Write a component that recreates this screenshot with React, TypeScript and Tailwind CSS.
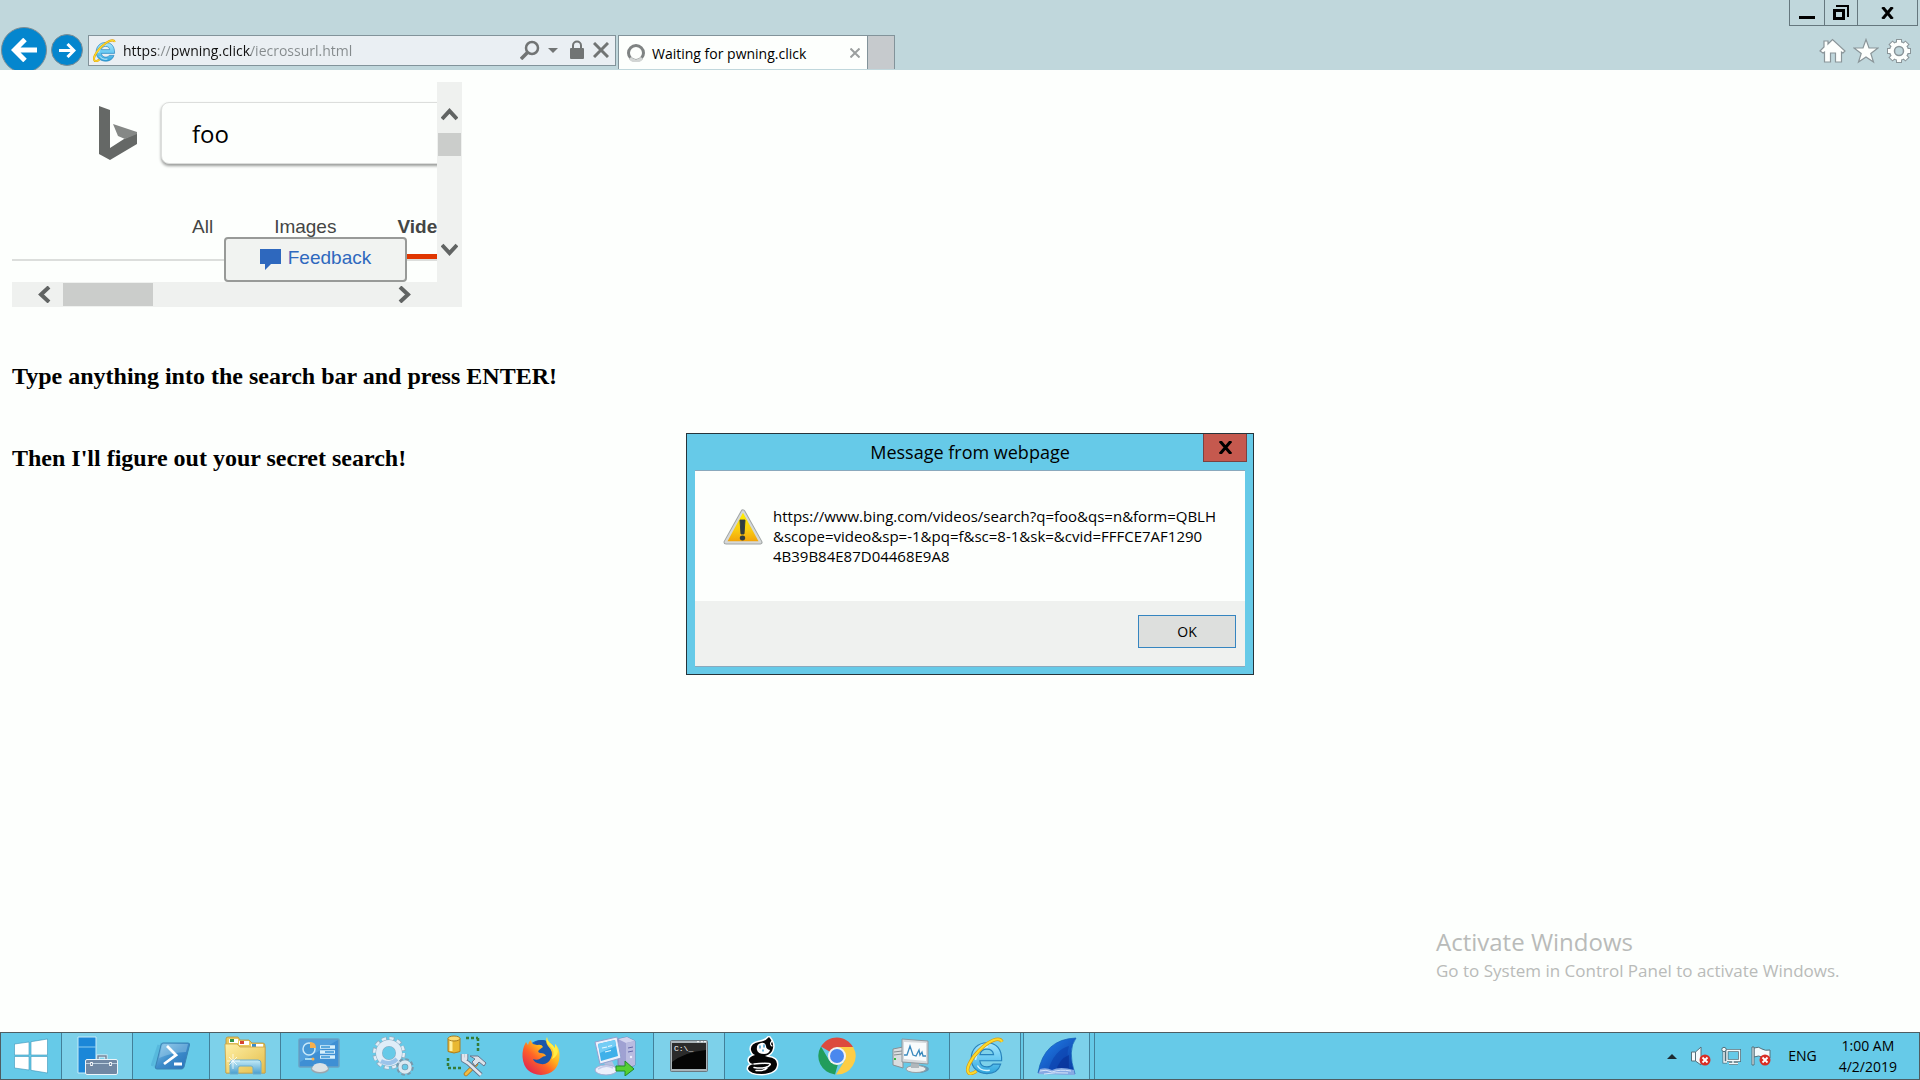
import type { ReactNode } from "react"

const ui = "font-['Open_Sans','Noto_Sans',sans-serif]"

function IeLogo({ size }: { size: number }) {
    return (
        <svg width={size} height={size} viewBox="0 0 40 40" fill="none">
            <defs>
                <linearGradient id="ieBlue" x1="0" y1="0" x2="0" y2="1">
                    <stop offset="0" stopColor="#a5e6fb" />
                    <stop offset="0.5" stopColor="#6ccbf3" />
                    <stop offset="1" stopColor="#2fa4dc" />
                </linearGradient>
            </defs>
            <path
                d="M37.500 25H14.500C15 29 18 31.500 22 31.500C25 31.500 27 30.500 28.500 28.500H36.500C34.500 35 29 38.500 22 38.500C12.500 38.500 5.500 32 5.500 22.500C5.500 13 12.500 6 22 6C32 6 38 13 37.500 25ZM14.700 18.500H29C28.500 15 26 12.800 22 12.800C18 12.800 15.500 15 14.700 18.500Z"
                fill="url(#ieBlue)" stroke="#2783bd" strokeWidth="1.200" />
            <path d="M10 24c1-8 6-13 13-14M12 30c2 4 7 6 13 5" stroke="#d6f5fe" strokeWidth="1.500" />
            <path d="M38 5C35-1 24 4 14 14C5 23-1 34 3 38C5 39.500 8 38 11 36" stroke="#d99a12" strokeWidth="3.600" />
            <path d="M38 5C35-1 24 4 14 14C5 23-1 34 3 38C5 39.500 8 38 11 36" stroke="#fddb2c" strokeWidth="2.200" />
        </svg>
    )
}

function StartIcon() {
    return (
        <svg width="34" height="36" viewBox="0 0 34 36" fill="#fff" stroke="#3b93b8" strokeWidth="0.600">
            <path d="M.5 6L15 4v13H.5zM17 3.700L33.500 1v16H17zM.5 18.500H15V32L.5 30zM17 18.500h16.500V35L17 32.300z" />
        </svg>
    )
}

function ServerManagerIcon() {
    return (
        <svg width="42" height="40" viewBox="0 0 42 40">
            <path d="M2 1h18v36H2z" fill="#1b87d8" stroke="#c8ecf9" />
            <path d="M2 11h18" stroke="#8ccdf0" />
            <path d="M22 23v-3h8v3" fill="none" stroke="#e5f0f6" strokeWidth="3" />
            <path d="M22 23v-3h8v3" fill="none" stroke="#71859c" strokeWidth="1.500" />
            <rect x="9.500" y="23.500" width="32" height="15" rx="1.500" fill="#7188a3" stroke="#edf5f9" />
            <path d="M10 27.500h31" stroke="#bdd0df" />
            <path d="M15.500 26v4M34.500 26v4" stroke="#fff" strokeWidth="2.500" />
            <path d="M15.500 27v2M34.500 27v2" stroke="#7188a3" />
        </svg>
    )
}

function PowerShellIcon() {
    return (
        <svg width="40" height="30" viewBox="0 0 40 30">
            <defs>
                <linearGradient id="ps" x1="0" y1="0" x2="1" y2="1">
                    <stop offset="0" stopColor="#8cc9ea" />
                    <stop offset="0.500" stopColor="#3d8dcb" />
                    <stop offset="1" stopColor="#286fb8" />
                </linearGradient>
            </defs>
            <path d="M1 25L8 4M4 27L11 2" stroke="#3d9acb" strokeWidth="3" opacity="0.350" />
            <path d="M12 2h25q2 0 1.500 2L33 26q-.6 2-2.500 2H6q-2 0-1.500-2L10 4q.5-2 2-2z" fill="url(#ps)" stroke="#3a84b5" />
            <path d="M13 3h24l-2 8Q22 11 8 17l3-12z" fill="#b7e0f4" opacity="0.350" />
            <path d="M16 5l9 9-12 9M23 23h8" fill="none" stroke="#fff" strokeWidth="2.800" />
        </svg>
    )
}

function ExplorerIcon() {
    return (
        <svg width="42" height="40" viewBox="0 0 42 40">
            <defs>
                <linearGradient id="folder" x1="0" y1="0" x2="1" y2="1">
                    <stop offset="0" stopColor="#fff0a5" />
                    <stop offset="1" stopColor="#e3bd4b" />
                </linearGradient>
                <linearGradient id="holder" x1="0" y1="0" x2="0" y2="1">
                    <stop offset="0" stopColor="#c5ecf8" />
                    <stop offset="1" stopColor="#489dcd" />
                </linearGradient>
            </defs>
            <path d="M2 6V3q0-2 2-2h10l2 3h9l3 3h11q2 0 2 3v27H2z" fill="#e8c95e" stroke="#b9913b" strokeWidth="0.800" />
            <path d="M5 3h9v4H5zM15 5h10v4H15zM27 8h12v4H27z" fill="#fff" />
            <path d="M6 3h4v3H6z" fill="#329447" />
            <path d="M16 5h4v3h-4z" fill="#d74432" />
            <path d="M28 8h4v3h-4z" fill="#368dcc" />
            <path d="M1 8h12l3 3h25v26H2z" fill="url(#folder)" stroke="#cba346" strokeWidth="0.800" />
            <path d="M6 38V27q0-3 3-3h25q3 0 3 3v11h-8v-6q0-2-2-2H16q-2 0-2 2v6z" fill="url(#holder)" stroke="#6aaed0" />
            <path d="M9 18v15M3 25h13M5 21l8 8M13 21l-8 8" stroke="#fff" strokeWidth="0.800" opacity="0.900" />
        </svg>
    )
}

function ControlPanelIcon() {
    return (
        <svg width="42" height="36" viewBox="0 0 42 36">
            <rect x="1" y="1" width="40" height="28" rx="1" fill="#3e8fd4" stroke="#6aa2c4" strokeWidth="1.500" />
            <path d="M2 2h38L2 24z" fill="#65b1e5" opacity="0.500" />
            <circle cx="11" cy="11" r="6" fill="#4798d6" stroke="#c9e8f9" strokeWidth="1.500" />
            <path d="M12 10V4q6 0 6 6z" fill="#f9b04d" />
            <path d="M22 9h15M22 14h15M22 19h15" stroke="#d6f0fc" strokeWidth="3.500" />
            <path d="M23 9h9M27 14h9M23 19h9" stroke="#3591d3" strokeWidth="1.500" />
            <path d="M7 21h7" stroke="#a6dcf4" strokeWidth="2" />
            <circle cx="15" cy="21" r="1.500" fill="#f9b04d" />
            <ellipse cx="22" cy="31" rx="9" ry="4.500" fill="#9ba6ae" />
            <path d="M14 31q1-6 8-6t8 6q-3 3-8 3t-8-3z" fill="#dce2e5" />
        </svg>
    )
}

function ServicesIcon() {
    return (
        <svg width="42" height="40" viewBox="0 0 42 40" fill="none">
            <circle cx="17" cy="17" r="14.500" stroke="#8eaec2" strokeWidth="4.500" strokeDasharray="5 2.590" />
            <circle cx="17" cy="17" r="14" stroke="#e1eef7" strokeWidth="4" strokeDasharray="4 3.330" />
            <circle cx="17" cy="17" r="10" stroke="#88aac0" strokeWidth="7" />
            <circle cx="17" cy="17" r="10" stroke="#dfedf8" strokeWidth="6" />
            <path d="M9 25q9 5 16-2" stroke="#9cc4ea" strokeWidth="4" />
            <circle cx="33" cy="31" r="7" stroke="#7899ac" strokeWidth="3.500" strokeDasharray="3.300 2.200" />
            <circle cx="33" cy="31" r="4.800" stroke="#7899ac" strokeWidth="4.500" />
            <circle cx="33" cy="31" r="5" stroke="#dbe9f2" strokeWidth="3.400" />
        </svg>
    )
}

function DatabaseToolsIcon() {
    return (
        <svg width="42" height="42" viewBox="0 0 42 42" fill="none">
            <path d="M2 3.500v13q6 3 12 0v-13z" fill="#e9b832" stroke="#a97d20" />
            <path d="M5 5v11" stroke="#fff0a2" strokeWidth="3" />
            <ellipse cx="8" cy="3.500" rx="6" ry="2.500" fill="#fbdc72" stroke="#a97d20" />
            <path d="M20 3h12M32 3v15M2 23v10M2 33h15" stroke="#357c36" strokeWidth="2.500" strokeDasharray="3 2" />
            <path d="M30 29l-10 10" stroke="#a97422" strokeWidth="4.500" strokeLinecap="round" />
            <path d="M30 29l-10 10" stroke="#f2bc41" strokeWidth="3" strokeLinecap="round" />
            <path d="M24 21h8l8 7-2 3-5-4-4 4-3-4 3-3z" fill="#dce2e9" stroke="#66768e" />
            <path d="M17 19v6l5 3L35 40M17 24h3v-5" stroke="#63748c" strokeWidth="4.500" strokeLinejoin="round" />
            <path d="M17 19v6l5 3L35 40M17 24h3v-5" stroke="#dfe5ed" strokeWidth="2.800" strokeLinejoin="round" />
        </svg>
    )
}

function FirefoxIcon() {
    return (
        <svg width="38" height="38" viewBox="0 0 38 38">
            <defs>
                <linearGradient id="ff" x1="0.900" y1="0.100" x2="0.200" y2="0.900">
                    <stop offset="0" stopColor="#fff044" />
                    <stop offset="0.400" stopColor="#ffb01e" />
                    <stop offset="0.650" stopColor="#ff6427" />
                    <stop offset="1" stopColor="#e52c4b" />
                </linearGradient>
            </defs>
            <circle cx="19" cy="19" r="16" fill="#1269c7" />
            <path d="M13 5q8-5 16 2l4 11-4 10-14 4q-8-8-2-27z" fill="#1a56aa" />
            <path
                d="M25 0q-2 5 1 9 6 6 3 12-3 7-10 6-7-1-8-5 5 2 8-1 2-2 5-2-1-3-6-3-3-1-1-3l4-3q-1-3-6-2l-4-1q-2-2-2-4Q6 5 6 8L4 5Q0 12 .5 20 2 37 19 38q17-1 18.500-18Q38 11 33 7v4q-3-4-6-6-2-2-2-5z"
                fill="url(#ff)" />
            <path d="M25 0q-2 5 3 9 6 5 2 13 5-2 6-8-1-4-3-7v4q-3-4-6-6-2-2-2-5z" fill="#ffed43" />
        </svg>
    )
}

function RemoteComputerIcon() {
    return (
        <svg width="42" height="40" viewBox="0 0 42 40">
            <path d="M24 3l9-2 8 4v24l-7 4-10-4z" fill="#9fa1d2" stroke="#7a7cb3" strokeWidth="0.800" />
            <path d="M24 3l9-2 8 4-9 2z" fill="#d3d4ee" />
            <path d="M32 7l9-2v24l-9 3z" fill="#b9bbe0" />
            <path d="M34 12l5-1M34 16l5-1" stroke="#6367a9" />
            <circle cx="37" cy="21" r="1.200" fill="#eef0ff" />
            <path d="M10 27l8-2 3 6-8 2z" fill="#b5bfde" />
            <ellipse cx="12" cy="34" rx="11" ry="5" fill="#eceffb" stroke="#a2abd2" />
            <path d="M4 33q8-5 15-1" fill="none" stroke="#c5cce8" strokeWidth="1.500" />
            <path d="M1 6L23 1l4 21-21 6z" fill="#eef1fb" stroke="#94a1d0" />
            <path d="M4 8l17-4 3 16-17 5z" fill="#3fb0e9" />
            <path d="M4 8l17-4 1 6L6 17z" fill="#74cdf5" />
            <path d="M8 12l5-1M14 10.500l4-1M11 16l6-1.500" stroke="#e4f8ff" strokeWidth="1.200" />
            <path d="M22 30h9v-5l9 8-9 7v-5h-9z" fill="#55cf31" stroke="#228c26" />
        </svg>
    )
}

function TerminalIcon() {
    return (
        <svg width="38" height="32" viewBox="0 0 38 32">
            <rect x="0.500" y="0.500" width="37" height="31" rx="1" fill="#aab4b9" stroke="#697880" />
            <path d="M2 3h34v26H2z" fill="#050505" />
            <path d="M2 3h34v7Q15 12 2 22z" fill="#454545" opacity="0.600" />
            <path d="M27 1.700h2M31 1.700h2M34 1.700h2" stroke="#fff" />
            <text x="4" y="11" fill="#fff" fontSize="8" fontFamily="Liberation Mono, monospace">C:\_</text>
        </svg>
    )
}

function GhostIcon() {
    return (
        <svg width="34" height="40" viewBox="0 0 34 40" strokeLinecap="round" strokeLinejoin="round">
            <path
                d="M23 1Q20 5 13 6Q4 8 5 14Q6 18 9 19Q2 21 3 25Q4 28 8 28Q2 29 2 33Q4 38 16 38Q31 37 31 28Q31 22 22 21L19 20Q26 18 27 12Q28 7 23 1z"
                fill="#050505" stroke="#fff" strokeWidth="3" />
            <path
                d="M23 1Q20 5 13 6Q4 8 5 14Q6 18 9 19Q2 21 3 25Q4 28 8 28Q2 29 2 33Q4 38 16 38Q31 37 31 28Q31 22 22 21L19 20Q26 18 27 12Q28 7 23 1z"
                fill="#050505" />
            <path d="M11 14Q10 8 15 7Q19 6 20 10Q20 13 24 14Q23 18 18 18Q12 18 11 14z" fill="#fff" />
            <path d="M14 10v2M18 9v2M17 14v1" stroke="#4ca4ce" strokeWidth="1.600" />
            <path d="M26 5Q23 8 26 10" fill="none" stroke="#fff" strokeWidth="1.200" />
            <path d="M8 28Q17 27 23 27.500Q26 28 22 30.500Q17 33 8 31.500M21 32Q19 35 10 34.500" fill="none" stroke="#fff" strokeWidth="1.500" />
        </svg>
    )
}

function ChromeIcon() {
    return (
        <svg width="38" height="38" viewBox="0 0 38 38">
            <path d="M19 19L3 9.500A18.500 18.500 0 0 1 35 10H19z" fill="#dc4a3e" />
            <path d="M19 10h16.200A18.500 18.500 0 0 1 18 37.500L27 23z" fill="#fdcd45" />
            <path d="M3 9.500L11.500 24 20 27l-3 10.500A18.500 18.500 0 0 1 3 9.500z" fill="#219d5b" />
            <circle cx="19" cy="19" r="9" fill="#f2f2f2" />
            <circle cx="19" cy="19" r="7" fill="#4a88ee" />
        </svg>
    )
}

function PerformanceIcon() {
    return (
        <svg width="38" height="36" viewBox="0 0 38 36">
            <path d="M1 11l10-2v21l-10-3z" fill="#d9dddf" stroke="#888f93" />
            <path d="M2 14l8-1M2 17l8-1" stroke="#858d91" />
            <path d="M2 21h2" stroke="#38bb46" strokeWidth="2" />
            <ellipse cx="26" cy="31" rx="11" ry="4" fill="#6898b2" />
            <ellipse cx="24" cy="31" rx="10" ry="3.500" fill="#e6eaeb" stroke="#94a0a5" />
            <path d="M19 24h8v6h-8z" fill="#b0b7bb" />
            <path d="M10 1l26 2v23l-26-2z" fill="#d6dadd" stroke="#8d979d" />
            <path d="M12 4l22 1v18l-22-2z" fill="#f8fbfc" />
            <path d="M12 17h3l3-9 3 9 3 1 3-6 1 5 2-3 1 4h3" fill="none" stroke="#3989bd" strokeWidth="1.300" />
        </svg>
    )
}

function SharkFinIcon() {
    return (
        <svg width="40" height="38" viewBox="0 0 40 38">
            <defs>
                <linearGradient id="fin" x1="0" y1="0" x2="1" y2="1">
                    <stop offset="0" stopColor="#2384ef" />
                    <stop offset="1" stopColor="#09379f" />
                </linearGradient>
            </defs>
            <path d="M1 36Q7 2 39 1q-9 12-1 36z" fill="url(#fin)" stroke="#0e5bb5" strokeWidth="0.700" />
            <path d="M11 34Q17 13 32 9q-3 8 0 25z" fill="#0b3eab" opacity="0.550" />
            <path d="M19 34q3-12 13-16v16z" fill="#082f94" opacity="0.600" />
            <path d="M1 37l2-5q6-2 12 1 8-4 22 0l1 5z" fill="#86a9e3" />
            <path d="M3 34q6-2 12 1 8-3 19-1M7 37q11-2 24-1" fill="none" stroke="#d7e5fa" />
        </svg>
    )
}

const tasks: { name: string; icon: ReactNode; active?: boolean }[] = [
    { name: "Server Manager", icon: <ServerManagerIcon />, active: true },
    { name: "PowerShell", icon: <PowerShellIcon /> },
    { name: "File Explorer", icon: <ExplorerIcon />, active: true },
    { name: "Control Panel", icon: <ControlPanelIcon /> },
    { name: "Services", icon: <ServicesIcon /> },
    { name: "Database Tools", icon: <DatabaseToolsIcon /> },
    { name: "Firefox", icon: <FirefoxIcon /> },
    { name: "Remote Computer", icon: <RemoteComputerIcon /> },
    { name: "Command Prompt", icon: <TerminalIcon />, active: true },
    { name: "Ghostscript", icon: <GhostIcon /> },
    { name: "Chrome", icon: <ChromeIcon /> },
    { name: "Performance", icon: <PerformanceIcon /> },
    { name: "Internet Explorer", icon: <IeLogo size={38} />, active: true },
]

function BrowserBar() {
    return (
        <header className="flex h-[70px] items-start justify-between overflow-hidden bg-[#c0d7dc]">
            <nav className="flex h-[46px] items-center mt-[27px] pl-px">
                <button aria-label="Back" className="flex size-[46px] items-center justify-center rounded-full border border-[#7d8d94] bg-[#0486ce]">
                    <svg width="26" height="24" viewBox="0 0 26 24" fill="none" stroke="#fff" strokeWidth="5">
                        <path d="M26 12H4M14 1.500L3.500 12 14 22.500" />
                    </svg>
                </button>
                <button aria-label="Forward" className="ml-1 flex size-8 items-center justify-center rounded-full border border-[#7d8d94] bg-[#0486ce]">
                    <svg width="17" height="15" viewBox="0 0 17 15" fill="none" stroke="#fff" strokeWidth="3">
                        <path d="M0 7.500h15M8.500 1l6.500 6.500L8.500 14" />
                    </svg>
                </button>
                <div className="ml-[5px] flex h-[31px] w-[27.5vw] items-center border border-[#82939a] bg-[#eaeff3] pl-1 pr-[6px]">
                    <IeLogo size={23} />
                    <input
                        aria-label="Address"
                        defaultValue="https://pwning.click/iecrossurl.html"
                        className="ml-[7px] min-w-0 flex-1 bg-[linear-gradient(90deg,#111_34px,#848a8c_34px,#848a8c_48px,#111_48px,#111_128px,#848a8c_128px)] bg-clip-text pt-[2px] text-sm text-transparent outline-none" />
                    <button aria-label="Search">
                        <svg width="20" height="20" viewBox="0 0 20 20" fill="none" stroke="#717474">
                            <circle cx="12" cy="8" r="6" strokeWidth="2.500" />
                            <path d="M8 12l-7 7" strokeWidth="3.500" />
                        </svg>
                    </button>
                    <button aria-label="Search options" className="ml-2">
                        <svg width="10" height="5" viewBox="0 0 10 5" fill="#717474"><path d="M0 0h10L5 5z" /></svg>
                    </button>
                    <svg className="ml-3" width="14" height="20" viewBox="0 0 14 20" fill="#717474">
                        <rect y="8" width="14" height="11" rx="1" />
                        <path d="M3 9V5.500a4 4 0 0 1 8 0V9" fill="none" stroke="#717474" strokeWidth="2" />
                    </svg>
                    <button aria-label="Stop" className="ml-[9px]">
                        <svg width="16" height="16" viewBox="0 0 16 16" stroke="#717474" strokeWidth="3"><path d="M1 1l14 14M15 1L1 15" /></svg>
                    </button>
                </div>
                <div className="mt-2 ml-[2px] flex h-[34px] w-[250px] items-center self-start border border-b-0 border-[#82939a] bg-[#fdfffd] pr-[7px] pl-2">
                    <svg width="18" height="18" viewBox="0 0 18 18" fill="none" strokeWidth="3">
                        <circle cx="9" cy="9" r="7.500" stroke="#7f8383" />
                        <path d="M3 14a7.500 7.500 0 0 0 12 0" stroke="#d2d5d4" />
                    </svg>
                    <span className="ml-[7px] flex-1 pt-[2px] text-sm text-black">Waiting for pwning.click</span>
                    <button aria-label="Close tab">
                        <svg width="10" height="10" viewBox="0 0 10 10" stroke="#9b9f9f" strokeWidth="2"><path d="M.5.5l9 9M9.500.5l-9 9" /></svg>
                    </button>
                </div>
                <button aria-label="New tab" className="mt-2 h-[34px] w-[27px] self-start border-t border-r border-[#82939a] bg-[#c6cacd]" />
            </nav>
            <div className="flex flex-col items-end">
                <div className="mr-[2px] flex h-[26px] border-x border-b border-[#65777e]">
                    <button aria-label="Minimize" className="flex w-[35px] items-center justify-center border-r border-[#65777e]">
                        <svg width="16" height="20" viewBox="0 0 16 20"><path d="M0 13h16v3H0z" /></svg>
                    </button>
                    <button aria-label="Restore" className="flex w-[33px] items-center justify-center border-r border-[#65777e]">
                        <svg width="16" height="16" viewBox="0 0 16 16" fill="none" stroke="#000">
                            <path d="M1.500 5.500h9v8h-9z" strokeWidth="3" />
                            <path d="M3 1h12v11" strokeWidth="2" />
                        </svg>
                    </button>
                    <button aria-label="Close" className="flex w-[59px] items-center justify-center">
                        <svg width="13" height="12" viewBox="0 0 13 12" stroke="#000" strokeWidth="3"><path d="M1.500 0l10 12M11.500 0l-10 12" /></svg>
                    </button>
                </div>
                <div className="mt-3 mr-2 flex gap-[7px]">
                    <button aria-label="Home">
                        <svg width="27" height="26" viewBox="0 0 27 26" fill="#fdfffd" stroke="#8a9599" strokeWidth="1.200">
                            <path d="M1 13L5 9V3h4v3l4.500-4.500L26 13l-2 2-1.500-1v10h-6v-9h-5v9h-6V14L4 15z" />
                        </svg>
                    </button>
                    <button aria-label="Favorites">
                        <svg width="26" height="26" viewBox="0 0 26 26" fill="#fdfffd" stroke="#8a9599" strokeWidth="1.200">
                            <path d="M13 1.500l3 8.500h9l-7.200 5.500L20.500 24 13 19l-7.500 5 2.700-8.500L1 10h9z" />
                        </svg>
                    </button>
                    <button aria-label="Tools">
                        <svg width="26" height="26" viewBox="0 0 26 26" fill="none">
                            <g stroke="#8a9599" strokeWidth="6">
                                <path d="M13 1v24M1 13h24M4.500 4.500l17 17M21.500 4.500l-17 17" />
                            </g>
                            <circle cx="13" cy="13" r="9.500" fill="#fdfffd" stroke="#8a9599" strokeWidth="1.200" />
                            <path d="M13 2v5M13 19v5M2 13h5M19 13h5M5.200 5.200l3 3M17.800 17.800l3 3M20.800 5.200l-3 3M8.200 17.800l-3 3" stroke="#fdfffd" strokeWidth="4" />
                            <circle cx="13" cy="13" r="4.500" fill="#c0d7dc" stroke="#8a9599" strokeWidth="1.500" />
                        </svg>
                    </button>
                </div>
            </div>
        </header>
    )
}

function Chevron({ d, vertical }: { d: string; vertical?: boolean }) {
    return (
        <svg width={vertical ? 17 : 14} height={vertical ? 14 : 17} viewBox={vertical ? "0 0 17 14" : "0 0 14 17"} fill="none" stroke="#616463" strokeWidth="4">
            <path d={d} />
        </svg>
    )
}

function BingFrame() {
    return (
        <section className="grid w-[450px] grid-cols-[425px_25px] grid-rows-[200px_25px] bg-[#eff1ef]">
            <div className="relative overflow-hidden bg-[#fdfffd] font-['Liberation_Sans',sans-serif] text-[19px] leading-7">
                <div className="flex items-start pt-5 pl-[87px]">
                    <svg className="mt-1 shrink-0" width="38" height="54" viewBox="0 0 38 54">
                        <path d="M0 0l11 4v38l14-9 13-6v11L11 54 0 48z" fill="#656866" />
                        <path d="M14 18l24 8v2l-12 5-7-3z" fill="#858886" />
                    </svg>
                    <input
                        aria-label="Search"
                        defaultValue="foo"
                        className="ml-6 h-[62px] w-[600px] shrink-0 rounded-lg border border-[#dcdedc] bg-[#fdfffd] pl-[30px] font-['Open_Sans',sans-serif] text-2xl text-black shadow-[0_2px_3px_#9a9c9a] outline-none" />
                </div>
                <div className="mt-[49px] flex gap-[61px] border-b-2 border-[#dcdedc] pl-[180px] text-[#444645]">
                    <a href="#all" className="h-[46px]">All</a>
                    <a href="#images" className="h-[46px]">Images</a>
                    <a href="#videos" className="h-[46px] border-b-[5px] border-[#e03600] font-bold">Vide</a>
                </div>
                <button className="absolute bottom-0 left-[212px] flex h-[45px] w-[183px] items-center justify-center gap-[7px] rounded-sm border-2 border-[#989a98] bg-[#f1f3f1] pb-1 text-[#2e68be]">
                    <svg className="mt-1" width="21" height="21" viewBox="0 0 21 21" fill="#2e68be"><path d="M0 0h21v15H11l-6 6v-6H0z" /></svg>
                    Feedback
                </button>
            </div>
            <div className="row-span-2 flex flex-col items-center pt-[25px]">
                <Chevron vertical d="M1 12l7.500-8 7.500 8" />
                <div className="mt-3 h-[23px] w-[23px] bg-[#cbcdcb]" />
                <div className="mt-[87px] flex"><Chevron vertical d="M1 2l7.500 8L16 2" /></div>
            </div>
            <div className="flex items-center pl-[25px]">
                <Chevron d="M12 1L4 8.500l8 7.500" />
                <div className="ml-3 h-[23px] w-[90px] bg-[#cbcdcb]" />
                <div className="ml-[245px]"><Chevron d="M2 1l8 7.500L2 16" /></div>
            </div>
        </section>
    )
}

function MessageDialog() {
    return (
        <div role="dialog" aria-labelledby="msg-title" className="absolute top-[433px] left-[686px] w-[568px] border border-[#26343a] bg-[#66cae8] px-2 pb-[7px]">
            <div className="relative h-9 pt-[5px] text-center">
                <h1 id="msg-title" className="text-lg leading-[26px]">Message from webpage</h1>
                <button aria-label="Close" className="absolute top-0 -right-[2px] flex h-7 w-[44px] items-center justify-center border border-t-0 border-[#7b4140] bg-[#c5594e]">
                    <svg width="13" height="13" viewBox="0 0 13 13" stroke="#000" strokeWidth="3"><path d="M1 0l11 13M12 0L1 13" /></svg>
                </button>
            </div>
            <div className="border-y border-[#8aa9bd]">
                <div className="flex h-[130px] gap-[10px] bg-[#fdfffd] px-[28px] pt-[35px]">
                    <svg className="mt-[3px] shrink-0" width="40" height="36" viewBox="0 0 40 39" preserveAspectRatio="none">
                        <defs>
                            <linearGradient id="warn" x1="0" y1="0" x2="0" y2="1">
                                <stop offset="0" stopColor="#fff000" />
                                <stop offset="0.600" stopColor="#f9cc12" />
                                <stop offset="1" stopColor="#f2a40b" />
                            </linearGradient>
                        </defs>
                        <path d="M20 3L37 36H3z" fill="#c9cdcc" stroke="#a0a5a4" strokeWidth="5" strokeLinejoin="round" />
                        <path d="M20 3L37 36H3z" fill="#d5d8d8" stroke="#d5d8d8" strokeWidth="3" strokeLinejoin="round" />
                        <path d="M20 4L35.500 35h-31z" fill="url(#warn)" />
                        <path d="M17 12h5l-1 15h-3z" fill="#303a41" stroke="#303a41" />
                        <circle cx="19.500" cy="31.500" r="2.700" fill="#303a41" />
                    </svg>
                    <p className="text-[15px] leading-5 whitespace-nowrap">
                        https://www.bing.com/videos/search?q=foo&amp;qs=n&amp;form=QBLH<br />
                        &amp;scope=video&amp;sp=-1&amp;pq=f&amp;sc=8-1&amp;sk=&amp;cvid=FFFCE7AF1290<br />
                        4B39B84E87D04468E9A8
                    </p>
                </div>
                <div className="flex h-[65px] justify-end bg-[#eff1ef] pt-[14px] pr-[9px]">
                    <button className="h-[33px] w-[98px] border border-[#3585c0] bg-[#dddfdd] text-sm">OK</button>
                </div>
            </div>
        </div>
    )
}

function ErrorBadge() {
    return (
        <g>
            <circle cx="14" cy="14" r="5.500" fill="#d92e25" />
            <path d="M11.500 11.500l5 5M16.500 11.500l-5 5" stroke="#fff" strokeWidth="1.800" />
        </g>
    )
}

function Taskbar() {
    return (
        <footer className="flex h-12 items-stretch border border-[#4e5d62] bg-[#66cae8]">
            <button aria-label="Start" className="flex w-[60px] items-center justify-center"><StartIcon /></button>
            <div className="flex gap-[2px]">
                {tasks.map((t) => (
                    <button
                        key={t.name}
                        aria-label={t.name}
                        className={t.active
                            ? "flex w-[72px] items-center justify-center border-x border-[#42809a] bg-[#7dd1ea]"
                            : "flex w-[72px] items-center justify-center"}>
                        {t.icon}
                    </button>
                ))}
                <div className="flex border-r border-[#42809a] pr-1">
                    <button aria-label="Wireshark" className="flex w-[67px] items-center justify-center border-x border-[#42809a] bg-[#7dd1ea]">
                        <SharkFinIcon />
                    </button>
                </div>
            </div>
            <div className="ml-auto flex items-center pr-[22px]">
                <button aria-label="Show hidden icons">
                    <svg width="10" height="5" viewBox="0 0 10 5" fill="#1d2a30"><path d="M0 5h10L5 0z" /></svg>
                </button>
                <div className="ml-[14px] flex gap-[10px]">
                    <svg width="20" height="20" viewBox="0 0 20 20" fill="#f3fafc" stroke="#54707b">
                        <path d="M.5 6h4v9h-4zM4.500 6L10 1v18l-5.500-4z" />
                        <g stroke="none"><ErrorBadge /></g>
                    </svg>
                    <svg width="20" height="20" viewBox="0 0 20 20" fill="none">
                        <path d="M6 4.500h12.500v10H6zM12 14v3M8 17.500h9M3 5v11h3" stroke="#4f6e7a" strokeWidth="3" />
                        <path d="M6 4.500h12.500v10H6zM12 14v3M8 17.500h9M3 5v11h3" stroke="#f3fafc" strokeWidth="1.400" />
                        <circle cx="3" cy="3.500" r="2.200" stroke="#4f6e7a" fill="#f3fafc" />
                    </svg>
                    <svg width="20" height="20" viewBox="0 0 20 20" fill="#f3fafc" stroke="#54707b">
                        <path d="M3 2q5-2 8 1 3 2 8 1v8q-5 2-8-1-3-2-8 0z" />
                        <path d="M1 1h2v18H1z" />
                        <g stroke="none"><ErrorBadge /></g>
                    </svg>
                </div>
                <span className="ml-[17px] text-sm">ENG</span>
                <time className="ml-[22px] text-center text-sm leading-[21px]">
                    1:00 AM<br />4/2/2019
                </time>
            </div>
        </footer>
    )
}

export default function App() {
    return (
        <div className={`relative flex min-h-screen flex-col bg-[#fdfffd] text-black ${ui}`}>
            <BrowserBar />
            <main className="flex-1 px-3 pt-3">
                <BingFrame />
                <div className="mt-[55px] flex flex-col gap-[54px] font-['Liberation_Serif',serif] text-2xl leading-7 font-bold">
                    <h3>Type anything into the search bar and press ENTER!</h3>
                    <h3>Then I'll figure out your secret search!</h3>
                </div>
            </main>
            <aside className="absolute right-[76px] bottom-24 w-[408px] text-[#b9bbb9]">
                <p className="text-2xl leading-8">Activate Windows</p>
                <p className="text-[17px] leading-[26px]">Go to System in Control Panel to activate Windows.</p>
            </aside>
            <MessageDialog />
            <Taskbar />
        </div>
    )
}
